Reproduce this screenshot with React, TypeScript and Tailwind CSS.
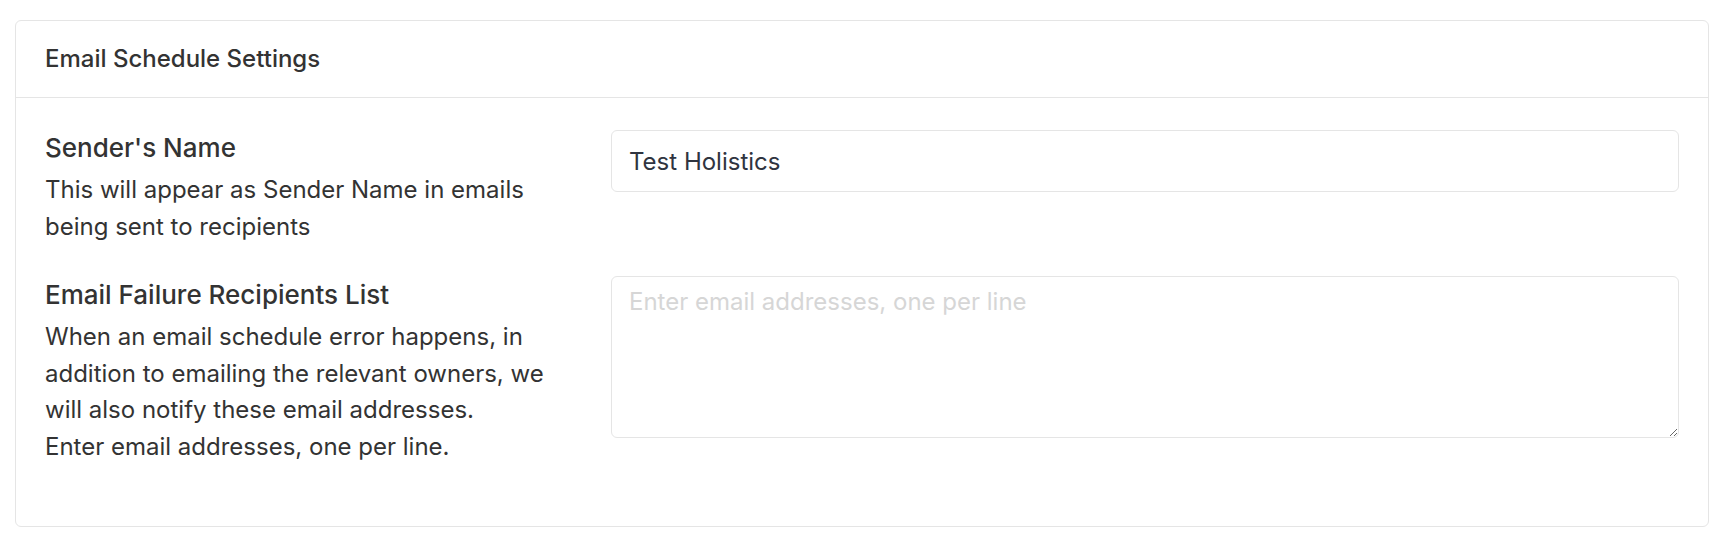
import React from "react";

export default function App() {
  return (
    <div className="min-h-screen bg-white px-[15px] pt-[20px] font-['Inter',sans-serif] text-[#333333]">
      <div className="rounded-[6px] border border-[#e5e5e5] bg-white">
        <div className="border-b border-[#e5e5e5] px-[29px] py-[20px] text-[24px] font-medium leading-[36px]">
          Email Schedule Settings
        </div>
        <div className="px-[29px] pt-[32px] pb-[61px]">
          <div className="mb-[32px] grid grid-cols-[520px_1fr] gap-x-[46px]">
            <div>
              <div className="text-[26px] font-medium leading-[36px]">Sender&apos;s Name</div>
              <p className="mt-[6px] text-[24px] leading-[36.5px]">
                This will appear as Sender Name in emails being sent to recipients
              </p>
            </div>
            <div>
              <input
                type="text"
                defaultValue="Test Holistics"
                className="h-[62px] w-full rounded-[6px] border border-[#e5e5e5] bg-white px-[17px] text-[24px] leading-[36px] text-[#2f3440] outline-none"
              />
            </div>
          </div>
          <div className="grid grid-cols-[520px_1fr] gap-x-[46px]">
            <div>
              <div className="text-[26px] font-medium leading-[36px]">Email Failure Recipients List</div>
              <p className="mt-[6px] text-[24px] leading-[36.5px]">
                When an email schedule error happens, in addition to emailing the relevant owners, we will also
                notify these email addresses.
                <br />
                Enter email addresses, one per line.
              </p>
            </div>
            <div className="-mt-[1px]">
              <textarea
                placeholder="Enter email addresses, one per line"
                className="block h-[162px] w-full rounded-[6px] border border-[#e5e5e5] bg-white px-[17px] pt-[7px] text-[24px] leading-[36px] text-[#2f3440] outline-none placeholder:text-[#d6d6d6]"
              />
            </div>
          </div>
        </div>
      </div>
    </div>
  );
}
